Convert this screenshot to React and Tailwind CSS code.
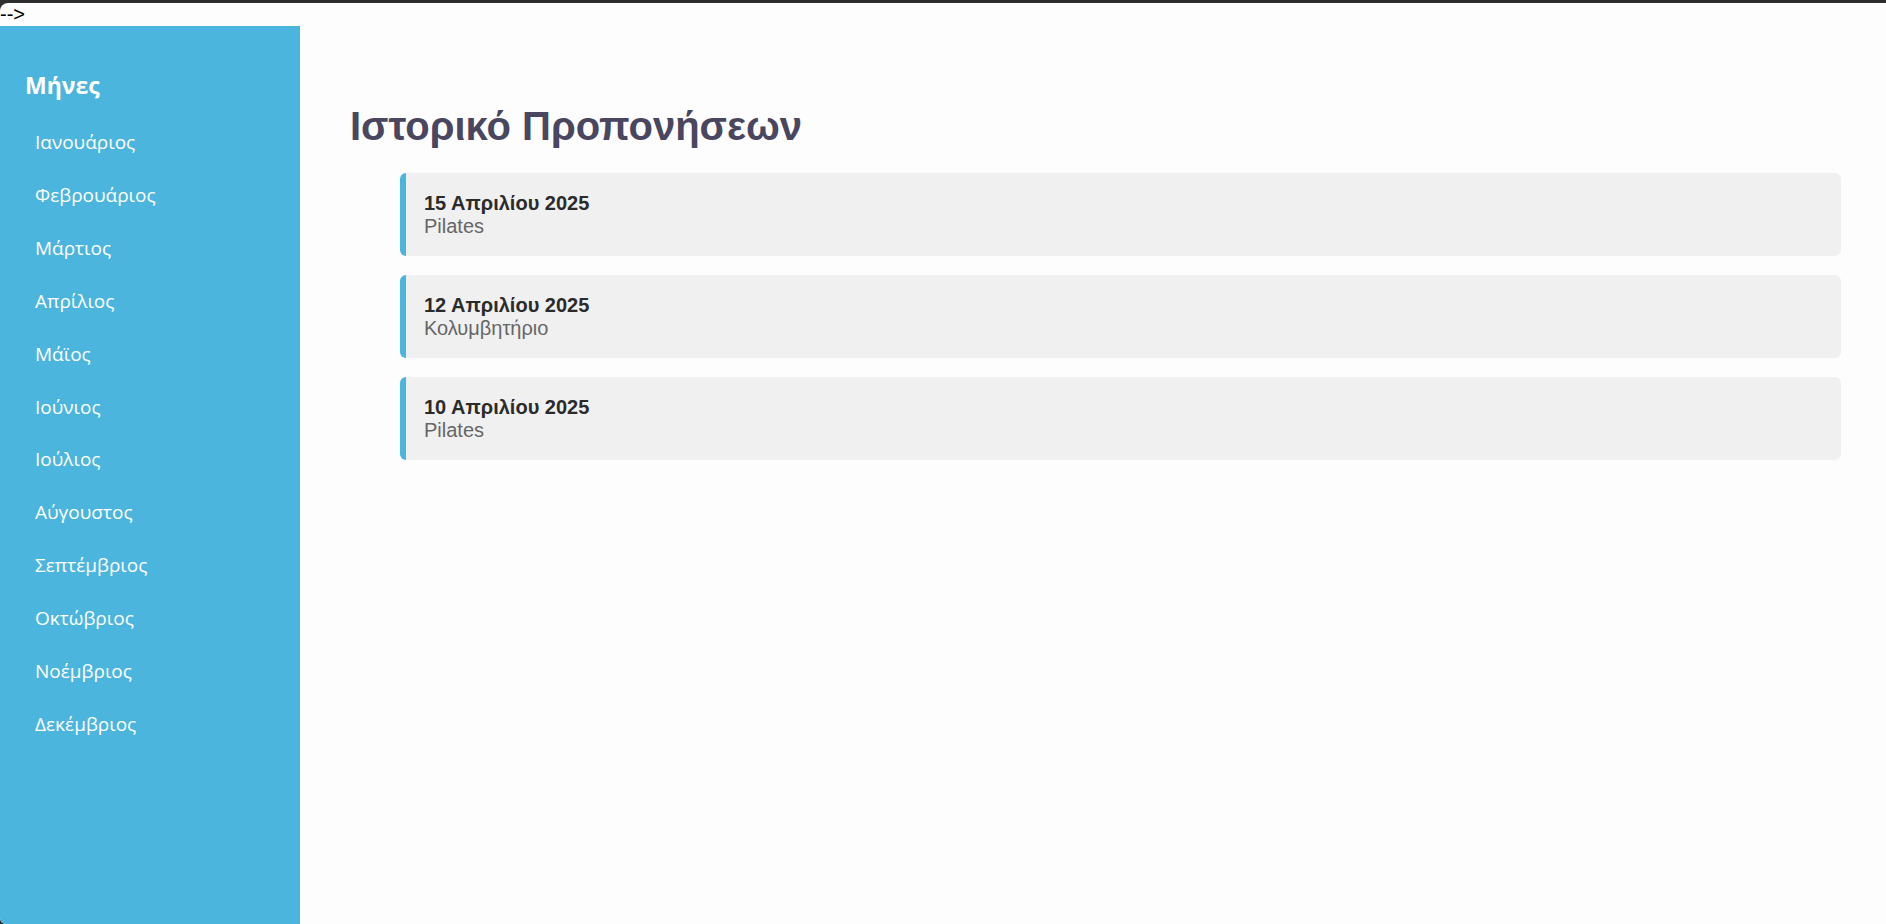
const months = [
  "Ιανουάριος",
  "Φεβρουάριος",
  "Μάρτιος",
  "Απρίλιος",
  "Μάϊος",
  "Ιούνιος",
  "Ιούλιος",
  "Αύγουστος",
  "Σεπτέμβριος",
  "Οκτώβριος",
  "Νοέμβριος",
  "Δεκέμβριος"
];

const workouts = [
  { date: "15 Απριλίου 2025", type: "Pilates" },
  { date: "12 Απριλίου 2025", type: "Κολυμβητήριο" },
  { date: "10 Απριλίου 2025", type: "Pilates" }
];

function Sidebar() {
  return (
    <aside className="w-[300px] shrink-0 bg-[#4bb5de] pt-[44px] font-['Open_Sans',sans-serif] text-white">
      <h2 className="pl-[25px] text-[23px] font-bold leading-[30px]">Μήνες</h2>
      <ul className="mt-[16px]">
        {months.map((m) => (
          <li key={m} className="pl-[35px] text-[19px] leading-[52.9px]">
            {m}
          </li>
        ))}
      </ul>
    </aside>
  );
}

function WorkoutCard({ date, type }) {
  return (
    <li className="rounded-[6px] border-l-[6px] border-[#4bb5de] bg-[#f0f0f0] pt-[19px] pb-[18px] pl-[18px] text-[20px] leading-[23px]">
      <div className="font-bold text-[#2b2b2b]">{date}</div>
      <div className="text-[#666666]">{type}</div>
    </li>
  );
}

export default function App() {
  return (
    <div className="flex h-screen flex-col bg-[#2e2e2e] pt-[3px]">
      <div className="flex flex-1 flex-col overflow-hidden rounded-tl-[8px] rounded-bl-[6px] bg-[#fdfdfd]">
        <div className="h-[23px] font-['Liberation_Sans',sans-serif] text-[20px] leading-[23px] text-black">--&gt;</div>
        <div className="flex flex-1">
          <Sidebar />
          <main className="flex-1 pt-[77px] pl-[50px] pr-[45px] font-['Liberation_Sans',Arial,sans-serif]">
            <h1 className="mb-[24px] text-[40px] font-bold leading-[46px] text-[#4a4660]">Ιστορικό Προπονήσεων</h1>
            <ul className="ml-[50px] flex flex-col gap-[19px]">
              {workouts.map((w, i) => (
                <WorkoutCard key={i} date={w.date} type={w.type} />
              ))}
            </ul>
          </main>
        </div>
      </div>
    </div>
  );
}
